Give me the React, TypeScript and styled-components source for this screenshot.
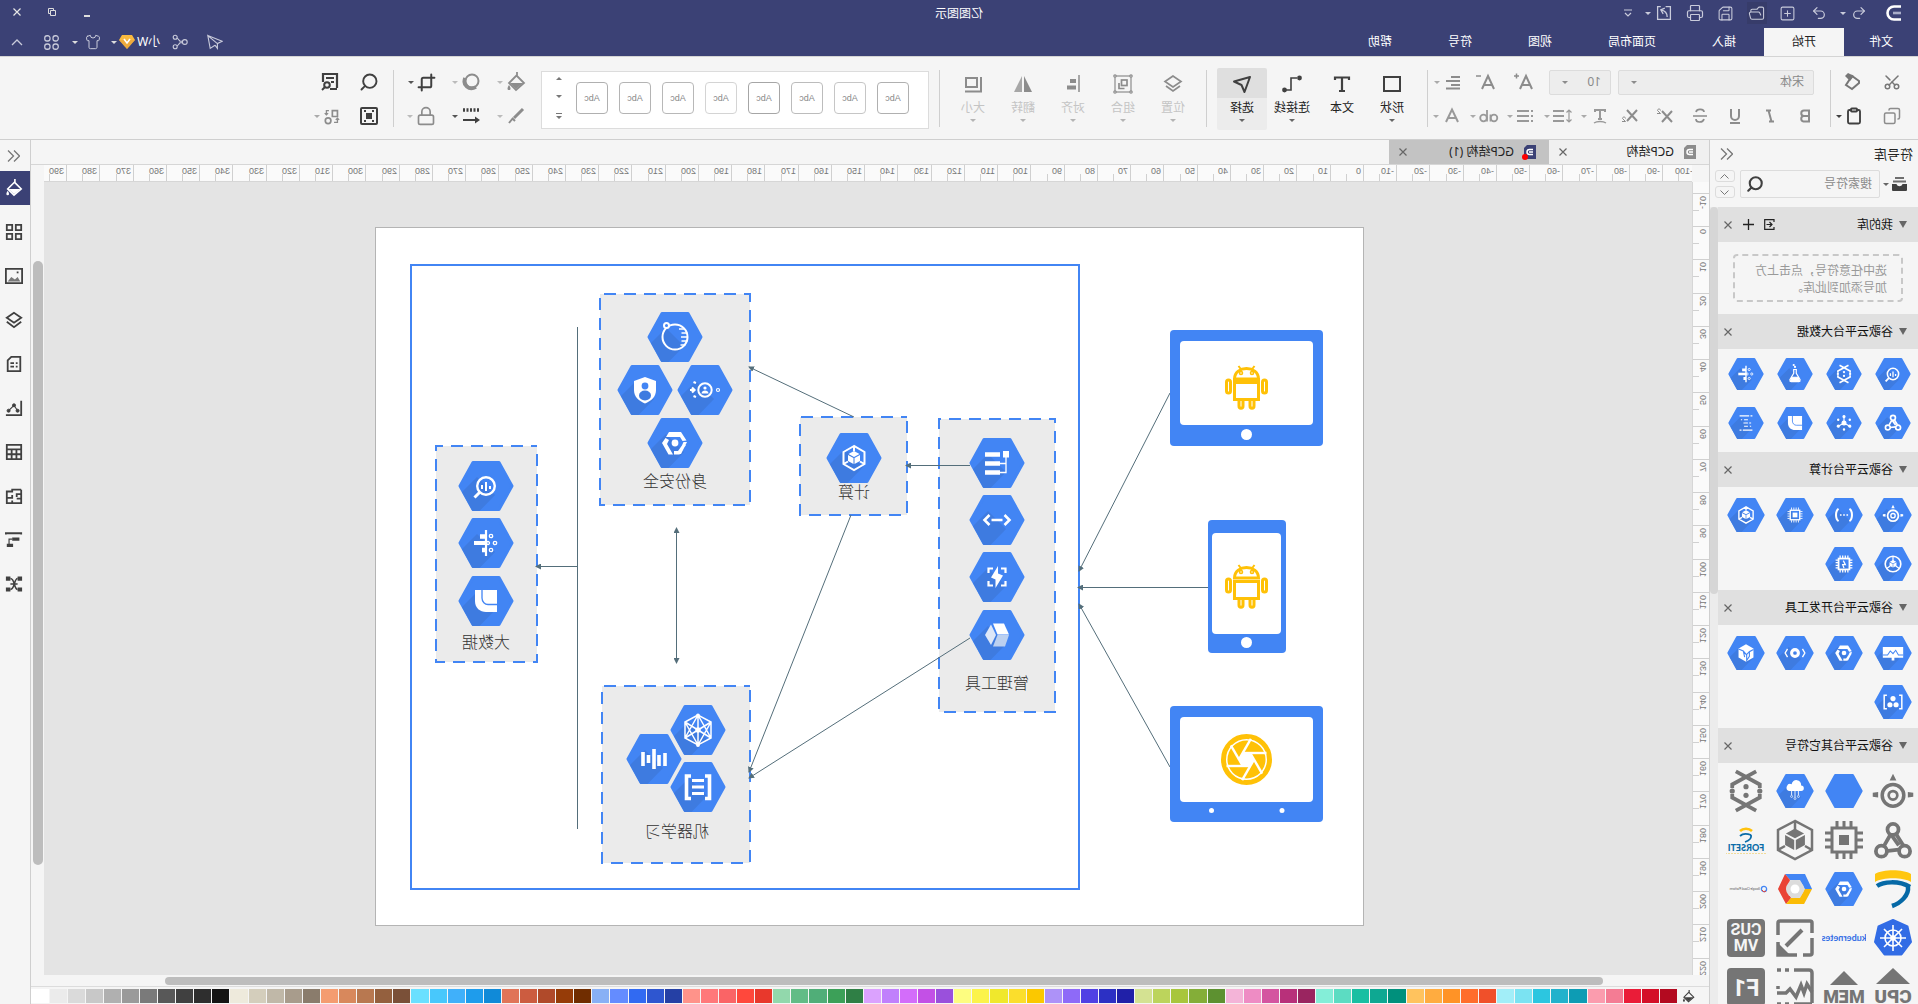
import React from "react";
import styled, { createGlobalStyle } from "styled-components";
import {
  Clipboard, Copy, Crop, FolderOpen, Lock, Printer,
  Redo2, Save, Scissors, Search, Shirt, SquarePlus, Undo2,
} from "lucide-react";

const INK = "#404040";
const DIM = "#8c8c8c";
const NAVY = "#3b4175";
const BLUE = "#4285f4";
const GREY = "#757575";
const LINE = "#546e7a";
const AMBER = "#ffc107";

const Global = createGlobalStyle`
  * { box-sizing: border-box; }
  body { margin: 0; overflow: hidden; }
  button, input, select { font: inherit; color: inherit; }
  svg { display: block; flex: none; }
`;

const Mirror = styled.div`
  display: flex;
  flex-direction: column;
  height: 100vh;
  transform: scaleX(-1);
  background: #f5f5f5;
  color: #222;
  font-family: "Noto Sans", "Noto Sans CJK SC", sans-serif;
  font-size: 12px;
  line-height: 16px;
`;

const Bare = styled.button<{ $w?: number }>`
  display: flex;
  align-items: center;
  justify-content: center;
  flex: none;
  width: ${(p) => (p.$w ? p.$w + "px" : "auto")};
  padding: 0;
  border: 0;
  background: none;
`;

const Caret = styled.i<{ $c?: string; $up?: boolean }>`
  flex: none;
  width: 0;
  height: 0;
  border: 3px solid transparent;
  border-top: ${(p) => (p.$up ? 0 : `3px solid ${p.$c || DIM}`)};
  border-bottom: ${(p) => (p.$up ? `3px solid ${p.$c || DIM}` : 0)};
`;

/* ---------- title bar ---------- */

const Header = styled.header`
  background: ${NAVY};
  color: #fff;
  border-bottom: 1px solid #d4d4d4;
`;
const TitleRow = styled.div`
  display: grid;
  grid-template-columns: 1fr auto 1fr;
  align-items: center;
  height: 28px;
`;
const Quick = styled.div`
  display: flex;
  align-items: center;
  gap: 11px;
  padding: 0 0 2px 16px;
  color: #c9cbdb;
`;
const QuickButton = styled(Bare)<{ $lit?: boolean }>`
  min-width: 20px;
  height: 22px;
  background: ${(p) => (p.$lit ? "#373c6a" : "none")};
`;
const QuickSplit = styled(Bare)`
  justify-content: space-between;
  width: 29px;
  padding: 0 0 0 2px;
`;
const LogoGap = styled.div`
  margin-right: 6px;
`;
const WindowButtons = styled.div`
  display: flex;
  justify-content: flex-end;
  padding-bottom: 4px;
`;
const TabRow = styled.div`
  display: flex;
  justify-content: space-between;
  height: 28px;
`;
const Tabs = styled.nav`
  display: flex;
`;
const Tab = styled.button<{ $on?: boolean; $first?: boolean }>`
  border: 0;
  padding: ${(p) => (p.$first ? "0 25px" : "0 28px")};
  background: ${(p) => (p.$on ? "#f5f5f5" : "none")};
  color: ${(p) => (p.$on ? "#222" : "#fff")};
`;
const Tools = styled.div`
  display: flex;
  align-items: center;
  gap: 10px;
  color: #c9cbdb;
`;
const Account = styled(Bare)`
  gap: 2px;
  color: #fff;
`;
const Spread = styled.div`
  display: flex;
  align-items: center;
  gap: 19px;
  margin-right: 2px;
`;
const ShirtButton = styled(Bare)`
  gap: 7px;
  margin-right: 3px;
`;

/* ---------- ribbon ---------- */

const Ribbon = styled.section`
  display: flex;
  flex: none;
  height: 83px;
  border-bottom: 1px solid #cfcfcf;
`;
const Rule = styled.div`
  flex: none;
  width: 1px;
  height: 57px;
  margin-top: 13px;
  background: #cfcfcf;
`;
const Rows = styled.div<{ $pad: string }>`
  display: flex;
  flex-direction: column;
  padding: ${(p) => p.$pad};
`;
const Row = styled.div<{ $pad?: number }>`
  display: flex;
  align-items: center;
  height: 34px;
  padding-left: ${(p) => p.$pad || 0}px;
`;
const SplitButton = styled.button<{ $w: number; $c?: string }>`
  display: flex;
  align-items: center;
  gap: 3px;
  flex: none;
  width: ${(p) => p.$w}px;
  padding: 0 0 0 3px;
  border: 0;
  background: none;
  color: ${(p) => p.$c || DIM};
`;
const Picker = styled.label<{ $w: number }>`
  display: flex;
  align-items: center;
  justify-content: space-between;
  width: ${(p) => p.$w}px;
  height: 25px;
  margin-right: 7px;
  padding: 0 12px 0 9px;
  border: 1px solid #dcdcdc;
  border-radius: 2px;
  background: #ededed;
  color: #8a8a8a;
`;
const Select = styled.select`
  flex: 1;
  min-width: 0;
  appearance: none;
  border: 0;
  background: none;
`;
const Big = styled.button<{ $on?: boolean; $dim?: boolean }>`
  display: flex;
  flex-direction: column;
  align-items: center;
  flex: none;
  width: 50px;
  height: 62px;
  margin-top: 11px;
  padding: 0;
  border: 0;
  border-radius: 2px;
  background: ${(p) => (p.$on ? "linear-gradient(#dfdfdf 30px, #ececec 30px)" : "none")};
  color: ${(p) => (p.$dim ? DIM : INK)};
`;
const BigIcon = styled.span`
  display: grid;
  place-items: center;
  height: 32px;
`;
const BigLabel = styled.span<{ $dim?: boolean }>`
  margin-bottom: 3px;
  color: ${(p) => (p.$dim ? "#c4c4c4" : "#222")};
`;
const BigSet = styled.div<{ $pad: number }>`
  display: flex;
  padding: 0 ${(p) => p.$pad}px;
`;
const Gallery = styled.div`
  display: flex;
  flex: none;
  align-items: center;
  gap: 11px;
  width: 388px;
  height: 58px;
  margin: 14px 8px 0 10px;
  padding: 0 0 4px 19px;
  border: 1px solid #dcdcdc;
  background: #fff;
`;
const Swash = styled.button<{ $b: string }>`
  width: 32px;
  height: 32px;
  padding: 0;
  border: 1px solid ${(p) => p.$b};
  border-radius: 4px;
  background: #fff;
  color: #888;
  font-family: "Liberation Sans", sans-serif;
  font-size: 9px;
`;
const Scroller = styled.div`
  display: flex;
  flex-direction: column;
  justify-content: space-between;
  height: 42px;
  margin-left: 3px;
`;

/* ---------- body ---------- */

const Body = styled.main`
  display: flex;
  flex: 1;
  min-height: 0;
`;
const Library = styled.aside`
  display: flex;
  flex-direction: column;
  flex: none;
  width: 209px;
  border-right: 1px solid #cfcfcf;
`;
const LibraryHead = styled.div`
  display: flex;
  justify-content: space-between;
  align-items: center;
  height: 27px;
  padding: 0 10px 0 5px;
  font-size: 13px;
`;
const SearchRow = styled.div`
  display: flex;
  align-items: center;
  gap: 3px;
  height: 40px;
  padding: 0 5px 6px 11px;
`;
const SearchBox = styled.label`
  display: flex;
  align-items: center;
  flex: 1;
  min-width: 0;
  height: 28px;
  margin-right: 2px;
  padding: 0 5px 0 7px;
  border: 1px solid #dcdcdc;
  border-radius: 2px;
  color: ${INK};
`;
const SearchInput = styled.input`
  flex: 1;
  min-width: 0;
  padding: 0;
  border: 0;
  background: none;
  &::placeholder { color: #8a8a8a; }
`;
const Steps = styled.div`
  display: flex;
  flex-direction: column;
  gap: 4px;
`;
const Step = styled.button`
  display: grid;
  place-items: center;
  width: 20px;
  height: 12px;
  padding: 0;
  border: 1px solid #dcdcdc;
  border-radius: 3px;
  background: none;
`;
const Scroll = styled.div`
  display: flex;
  flex: 1;
  min-height: 0;
`;
const Sections = styled.div`
  flex: 1;
  overflow: hidden;
`;
const Track = styled.div`
  display: grid;
  grid-template-rows: 387fr 410fr;
  width: 8px;
  background: #ececec;
`;
const Thumb = styled.div<{ $c?: string }>`
  border-radius: 5px;
  background: ${(p) => p.$c || "#bdbdbd"};
`;
const SectionHead = styled.div`
  display: flex;
  align-items: center;
  height: 35px;
  padding: 0 0 0 11px;
  background: #e0e0e0;
  color: #111;
`;
const SectionTitle = styled.h3`
  flex: 1;
  margin: 0 0 0 6px;
  font-size: 12px;
  font-weight: 400;
`;
const Triangle = styled.i`
  border: 4px solid transparent;
  border-top: 7px solid #666;
  border-bottom: 0;
`;
const Hint = styled.p`
  margin: 12px 15px;
  height: 48px;
  padding: 6px 14px;
  border: 2px dashed #c8c8c8;
  border-radius: 4px;
  color: #999;
  line-height: 17px;
`;
const Cells = styled.div<{ $pad: string }>`
  display: grid;
  grid-template-columns: repeat(4, 49px);
  grid-auto-rows: 49px;
  padding: ${(p) => p.$pad};
`;
const Cell = styled.button`
  display: grid;
  place-items: center;
  padding: 0;
  border: 0;
  background: none;
`;

const Center = styled.section`
  display: flex;
  flex-direction: column;
  flex: 1;
  min-width: 0;
`;
const DocTabs = styled.div`
  display: flex;
  flex: none;
  height: 25px;
  border-bottom: 1px solid #d6d6d6;
`;
const DocTab = styled.div<{ $on?: boolean }>`
  display: flex;
  align-items: center;
  gap: 10px;
  width: 160px;
  padding: 0 10px 0 13px;
  background: ${(p) => (p.$on ? "#c3c3c3" : "#f0f0f0")};
`;
const DocName = styled.span`
  flex: 1;
  white-space: nowrap;
`;
const DocIcon = styled.span`
  position: relative;
`;
const Dot = styled.i`
  position: absolute;
  right: -2px;
  bottom: -1px;
  width: 6px;
  height: 6px;
  border-radius: 3px;
  background: #f00;
`;
const Work = styled.div`
  display: grid;
  grid-template-columns: 17px 1fr 13px;
  grid-template-rows: 17px 1fr 12px;
  flex: 1;
  min-height: 0;
`;
const RulerX = styled.div`
  display: grid;
  grid-template-columns: repeat(13, 33px 33px 33px 34px);
  overflow: hidden;
  border-bottom: 1px solid #d6d6d6;
  background: #fafafa;
`;
const MarkX = styled.span`
  padding-left: 2px;
  border-left: 1px solid #d0d0d0;
  background: linear-gradient(#d0d0d0, #d0d0d0) 16px 100% / 1px 7px no-repeat;
  color: #777;
  font: 9px/12px "Liberation Sans", sans-serif;
`;
const ShiftX = styled.div`
  min-width: 0;
  overflow: hidden;
  & > div { margin-left: -4px; height: 100%; }
`;
const RulerY = styled.div`
  overflow: hidden;
  min-height: 0;
  border-right: 1px solid #d6d6d6;
  background: #fafafa;
`;
const MarksY = styled.div`
  display: grid;
  grid-template-rows: repeat(8, 33px 33px 33px 34px);
  margin-top: -22px;
`;
const MarkY = styled.span`
  padding-top: 2px;
  border-top: 1px solid #d0d0d0;
  background: linear-gradient(#d0d0d0, #d0d0d0) 100% 16px / 6px 1px no-repeat;
  color: #777;
  font: 9px/12px "Liberation Sans", sans-serif;
`;
const Turned = styled.span`
  display: inline-block;
  writing-mode: vertical-rl;
  transform: rotate(180deg);
  vertical-align: top;
`;
const Canvas = styled.div`
  overflow: hidden;
  min-width: 0;
  min-height: 0;
  padding: 45px 0 0 328px;
  background: #e4e4e4;
`;
const Paper = styled.div`
  width: 989px;
  border: 1px solid #b4b4b4;
  background: #fff;
`;
const SideTrack = styled.div`
  display: grid;
  grid-row: 1 / 3;
  grid-column: 3;
  grid-template-rows: 96fr 604fr 110fr;
  padding: 0 2px 0 1px;
`;
const BottomTrack = styled.div`
  display: grid;
  grid-row: 3;
  grid-column: 1 / 4;
  grid-template-columns: 106fr 1438fr 134fr;
  padding: 2px 0 1px;
  border-bottom: 1px solid #dcdcdc;
`;
const SideThumb = styled(Thumb)`
  grid-row: 2;
`;
const BottomThumb = styled(Thumb)`
  grid-column: 2;
`;
const Palette = styled.div`
  display: flex;
  flex: none;
  gap: 1px;
  height: 17px;
  padding: 2px 0 1px 9px;
  overflow: hidden;
`;
const Swatch = styled.button<{ $c: string }>`
  flex: 1;
  min-width: 0;
  padding: 0;
  border: 0;
  background: ${(p) => p.$c};
`;

const Dock = styled.aside`
  display: flex;
  flex-direction: column;
  flex: none;
  width: 31px;
  border-left: 1px solid #cfcfcf;
`;
const DockTop = styled(Bare)`
  height: 31px;
  padding-left: 3px;
`;
const DockButton = styled.button<{ $on?: boolean }>`
  display: flex;
  align-items: center;
  justify-content: center;
  height: 34px;
  margin-bottom: 10px;
  padding: 0 0 0 2px;
  border: 0;
  background: ${(p) => (p.$on ? NAVY : "none")};
  color: ${(p) => (p.$on ? "#fff" : INK)};
`;

/* ---------- small drawings ---------- */

type Kids = { children: React.ReactNode };
const Ico = ({ s = 20, w = 2, children }: Kids & { s?: number; w?: number }) => (
  <svg width={s} height={s} viewBox="0 0 20 20" fill="none" stroke="currentColor" strokeWidth={w} aria-hidden>
    {children}
  </svg>
);
const Cross = ({ c = "#666", s = 8 }) => (
  <svg width={s} height={s} viewBox="0 0 8 8" stroke={c} strokeWidth="1.2"><path d="M.5.5l7 7M7.5.5l-7 7" /></svg>
);
const Chevrons = () => (
  <svg width="13" height="12" viewBox="0 0 13 12" fill="none" stroke="#777" strokeWidth="1.3">
    <path d="M6 .5L.5 6 6 11.500M12 .5L6.500 6 12 11.500" />
  </svg>
);
const Doc = ({ c }: { c: string }) => (
  <svg width="12" height="14" viewBox="0 0 12 14">
    <path d="M0 0h9l3 3v11H0z" fill={c} />
    <path d="M3 4.500h3.500a2.500 2.500 0 0 1 0 5H3M3 7h4" fill="none" stroke="#fff" strokeWidth="1.500" />
  </svg>
);
const Bucket = () => (
  <>
    <path d="M9 3l8 8-7 7-8-7 7-7M9 4V0" strokeWidth="1.800" />
    <path d="M3 11h13l-6 6z" fill="currentColor" stroke="none" />
    <path d="M17 13c2 3 2 5 0 5s-2-2 0-5" fill="currentColor" stroke="none" />
  </>
);

/* ---------- cloud symbols ---------- */

const W = "#fff";
const cube = (c: string) => (
  <g fill={c}>
    <path d="M0-7l5.500 3L0-1-5.500-4z" />
    <path d="M-6-3l5.500 3v6L-6 3zM6-3L.5 0v6L6 3z" />
  </g>
);
const chipLegs = "M-6-9v-4M-2-9v-4M2-9v-4M6-9v-4M-6 9v4M-2 9v4M2 9v4M6 9v4M-9-6h-4M-9-2h-4M-9 2h-4M-9 6h-4M9-6h4M9-2h4M9 2h4M9 6h4";
const helix = (c: string) => (
  <g stroke={c} strokeWidth="2.600" fill="none">
    <path d="M-7-13.500L9.500-4.500v2.500M7-13.500L-9.500-4.500v2.500M-7 13.500L9.500 4.500v-2.500M7 13.500L-9.500 4.500v-2.500" />
    <g fill={c} stroke="none"><circle cx="-9.500" r="1.800" /><circle cx="9.500" r="1.800" /><circle r="1.800" cy="-3" /><circle r="1.800" cy="3" /></g>
  </g>
);
const nodes3 = (c: string) => (
  <g stroke={c} strokeWidth="2.600" fill="none">
    <circle cy="-8" r="3.800" /><circle cx="-8" cy="7" r="3.800" /><circle cx="8" cy="7" r="3.800" />
    <path d="M-2-5l-5 8M-4 6L5 7M2-4l4 7M-4 3L1-4" />
  </g>
);
const engine = (c: string) => (
  <g stroke={c} fill="none" strokeWidth="2.600">
    <circle r="8" cy="1" /><circle r="3.200" cy="1" strokeWidth="2" />
    <path d="M0-15l2.500 5h-5zM-15 1l0-2 4-.5v4l-4-.5zM15 1l0-2-4-.5v4l4-.5z" fill={c} stroke="none" />
  </g>
);
const ring = (c: string) => (
  <g fill={c}>
    <path d="M-6-11H6l3 5H-1l-4 0-2.500 4-4-.5z" />
    <path d="M-12-1l3.500 0L-3 11h-3zM-8 1l5 7 4 0 0 3.500h-5.500L-11 2z" />
    <path d="M9.500-5L13 0 6.500 11.500H2L8 1 6-3z" />
    <circle r="3.400" />
  </g>
);
const cubeHex = (c: string) => (
  <g>
    <path d="M0-12L10.500-6v12L0 12-10.500 6V-6zM0-12v5M-10.500 6L-6 3.500M10.500 6L6 3.500" fill="none" stroke={c} strokeWidth="2" />
    {cube(c)}
  </g>
);

const glyphs: Record<string, React.ReactNode> = {
  query: (
    <g stroke={W} fill="none" strokeWidth="2.400">
      <circle r="8.800" /><path d="M6.500 6.500l5 5" strokeWidth="3" />
      <path d="M-4 0v3M0-4v9M4-1v4" strokeWidth="2" />
    </g>
  ),
  flow: (
    <g stroke={W} fill="none">
      <path d="M0-13v26" strokeWidth="2.200" />
      <path d="M0-6.500h6M0 7h4" strokeWidth="4.500" /><path d="M0 0h12" strokeWidth="4" />
      <g strokeWidth="1.300"><circle cx="-5" cy="-7" r="1.700" /><circle cx="-9" r="1.700" /><circle cx="-5" cy="7" r="1.700" /><circle cx="-2" r="1.500" /></g>
    </g>
  ),
  quarter: (
    <g>
      <path d="M-11-11h22V0c0 7-5 11-11 11h-11z" fill={W} />
      <path d="M4-11v8c0 4-3 6.500-6 6.500h-9" fill="none" stroke={BLUE} strokeWidth="1.300" />
    </g>
  ),
  helix: helix(W),
  flask: (
    <g fill="none" stroke={W} strokeWidth="1.800">
      <path d="M-3-7h6M-2-7v6L-8 9c0 2 1 3 2 3H6c1 0 2-1 2-3L2-1v-6" />
      <path d="M-5 5h10l2 6H-7z" fill={W} /><circle cy="-11" r=".8" /><circle cx="2" cy="-14" r=".8" />
    </g>
  ),
  nodes: nodes3(W),
  star: (
    <g stroke={W} strokeWidth="1.800" fill={W}>
      <path d="M0 0v-10M0 0l-9 5M0 0l9 5" /><circle r="3" />
      <circle cy="-10" r="1.600" /><circle cx="-9" cy="5" r="1.600" /><circle cx="9" cy="5" r="1.600" />
      <circle cx="-9" cy="-5" r="1" /><circle cx="9" cy="-5" r="1" /><circle cy="10" r="1" />
    </g>
  ),
  prep: (
    <g stroke={W} strokeWidth="1.800" fill="none">
      <path d="M-10-11h3M-5-11h15M-3-5h6M-8 0h3M-3 0h7M-3 5h6M-10 11h15M7 11h3M6-5h2M-8 5h2" />
    </g>
  ),
  cubeHex: cubeHex(W),
  chip: (
    <g stroke={W} fill="none" strokeWidth="2"><rect x="-7" y="-7" width="14" height="14" /><rect x="-2.500" y="-2.500" width="5" height="5" fill={W} /><path d={chipLegs} transform="scale(.85)" strokeWidth="1.500" /></g>
  ),
  gpu: (
    <g stroke={W} fill="none" strokeWidth="2.600"><rect x="-8" y="-8" width="16" height="16" /><path d="M1-5l-3 6h4l-2 5" strokeWidth="1.800" /><path d={chipLegs} transform="scale(.95)" strokeWidth="2" /></g>
  ),
  func: (
    <g stroke={W} fill="none" strokeWidth="3">
      <path d="M-8-9c-5 3-5 15 0 18M8-9c5 3 5 15 0 18" /><path d="M-6 0h2.400M-1.200 0h2.400M3.600 0h2.400" strokeWidth="2.400" />
    </g>
  ),
  engine: engine(W),
  round: (
    <g><circle r="11.500" fill="none" stroke={W} strokeWidth="2.400" /><path d="M0-4V-11M-4 3l-6 4M4 3l6 4" stroke={W} strokeWidth="1.800" /><g transform="scale(.85)">{cube(W)}</g></g>
  ),
  monitor: (
    <g><path d="M-15-9h30V7H2v4h-4V7h-13z" fill={W} /><path d="M-15 3h7l4-7 4 5 4-4 4 6h7" fill="none" stroke={BLUE} strokeWidth="1.500" /></g>
  ),
  ring: ring(W),
  eye: (
    <g stroke={W} fill="none"><circle r="5" strokeWidth="4.500" /><path d="M-11-6l-3.500 6 3.500 6M11-6l3.500 6L11 6" strokeWidth="2" /></g>
  ),
  repo: (
    <g><path d="M0-13L11-6.500v13L0 13-11 6.500v-13z" fill={W} /><path d="M-11-5l6 3v7l4 6V3l5-6 7-3M-5-2l5 5M4-3L2 6" fill="none" stroke={BLUE} strokeWidth="1.600" /></g>
  ),
  registry: (
    <g fill={W}><path d="M-9-10h-4v20h4M9-10h4v20H9" fill="none" stroke={W} strokeWidth="2.200" /><circle cy="-5" r="3.800" /><circle cx="-4.500" cy="4" r="3.800" /><circle cx="4.500" cy="4" r="3.800" /></g>
  ),
  rain: (
    <g fill={W} stroke={W}><path d="M-9 0a4 4 0 0 1 0-8 7 7 0 0 1 14-2 5 5 0 0 1 4 10z" stroke="none" /><path d="M-5 0v6M0 0v9M5 0v6" strokeWidth="1.300" /><g fill="none"><circle cx="-5" cy="8" r="1.500" /><circle cy="11" r="1.500" /><circle cx="5" cy="8" r="1.500" /></g></g>
  ),
  deploy: (
    <g stroke={W} fill="none"><path d="M-3-8.500h15M-3 .5h15M-3 9.500h15" strokeWidth="4.600" /><path d="M-9-6V9.500h6M-9 .5h6" strokeWidth="1.300" /><rect x="-12" y="-12" width="6" height="6.500" fill={W} stroke="none" /></g>
  ),
  arrows: (
    <g stroke={W} fill="none" strokeWidth="2.600"><path d="M-7.500-5L-12.500 0l5 5M7.500-5L12.500 0l-5 5M-5.500 0H5.500" /></g>
  ),
  bolt: (
    <g><path d="M-8.500-4v-4.500H-4M8.500-4v-4.500H4M-8.500 4v4.500H-4M8.500 4v4.500H4" fill="none" stroke={W} strokeWidth="2.200" /><path d="M1-11V-3.500L6-1.500-1.500 11V2.500L-6 .5z" fill={W} transform="scale(-1 1)" /></g>
  ),
  box: (
    <g><path d="M-7-11.500H4l-4.500 11H-12z" fill={W} /><path d="M-12 0H-.5L4 11.500H-8z" fill="#bbd0f0" /><path d="M6-10.500L12 0 6 10 1 0z" fill="#dde7f8" /></g>
  ),
  orbit: (
    <g stroke={W} fill="none" strokeWidth="2"><circle r="12.500" /><circle cx="8.500" cy="-11.500" r="2.500" fill={BLUE} /><path d="M-12.500-4h6M-13 0h7M-12.500 4h6M-10.500 8h5M-9-8h5" strokeWidth="1.600" /></g>
  ),
  identity: (
    <g stroke={W} fill="none"><circle r="6.700" strokeWidth="2" /><circle cy="-2" r="1.600" fill={W} stroke="none" /><path d="M-3.500 3.500c0-4 7-4 7 0z" fill={W} stroke="none" /><circle cx="-13" r="1.500" strokeWidth="1.200" /><path d="M10 0h5M13-2.500L10.500 0 13 2.500M9-7l2.500-1M9 7l2.500-1" strokeWidth="2.200" /></g>
  ),
  shield: (
    <g><path d="M0-13l11 4v9c0 7-5 11-11 13.500C-6 11-11 7-11 0v-9z" fill={W} /><circle cy="-4" r="3.400" fill={BLUE} /><ellipse cy="5.500" rx="6" ry="5" fill="#3e7be0" /></g>
  ),
  mesh: (
    <g stroke={W} fill="none" strokeWidth="1.500"><path d="M0-15L13-8V8L0 15-13 8V-8zM0-15v30M-13-8L13 8M13-8L-13 8M0-15L-13 8M0-15L13 8M0 15L-13-8M0 15L13-8" /><g fill={W}><circle r="2" /><circle cy="-14.500" r="1.200" /><circle cy="15" r="1.200" /></g></g>
  ),
  wave: <path d="M-11-6v13M-5-4v11M0-10v20M5.500-4v8M11-7v14" fill="none" stroke={W} strokeWidth="3.600" />,
  bracket: (
    <g stroke={W} fill="none"><path d="M-7-11h-4.500v22.500H-7M7-11h4.500v22.500H7" strokeWidth="3.600" /><path d="M-6-6.500H6M-6 0H6M-6 6.500H6" strokeWidth="2.800" /></g>
  ),
};

const HexShape = ({ name }: { name?: string }) => (
  <>
    <path d="M-26 0L-13-23.500H13L26 0 13 23.500H-13z" fill={BLUE} stroke={BLUE} strokeWidth="3" strokeLinejoin="round" />
    {name && <path d="M9-9L24 6 13.500 25H6.500L-9 9z" fill="#3e7be0" />}
    {name && glyphs[name]}
  </>
);
const Hex = ({ name, w = 38 }: { name?: string; w?: number }) => (
  <svg width={w} height={w - 2} viewBox="-28 -26.500 56 53"><HexShape name={name} /></svg>
);
const Plain = ({ children }: Kids) => (
  <svg width="44" height="44" viewBox="-22 -22 44 44">{children}</svg>
);

const misc: React.ReactNode[] = [
  <Plain><g transform="translate(0 3) scale(1.350)">{engine(GREY)}</g></Plain>,
  <Hex />,
  <Hex name="rain" />,
  <Plain><g transform="scale(1.450)">{helix(GREY)}</g></Plain>,
  <Plain><g transform="translate(0 1) scale(1.450)">{nodes3(GREY)}</g></Plain>,
  <Plain>
    <rect x="-12" y="-12" width="24" height="24" fill="none" stroke={GREY} strokeWidth="3" />
    <rect x="-5" y="-5" width="10" height="10" fill={GREY} />
    <path d="M-7-13v-6M0-13v-6M7-13v-6M-7 13v6M0 13v6M7 13v6M-13-7h-6M-13 0h-6M-13 7h-6M13-7h6M13 0h6M13 7h6" stroke={GREY} strokeWidth="3" />
  </Plain>,
  <Plain>
    <path d="M0-19L17-10v20L0 19-17 10v-20zM0-19v9M-17 10l7-4M17 10l-7-4" fill="none" stroke={GREY} strokeWidth="2.500" />
    <g transform="scale(1.650)">{cube(GREY)}</g>
  </Plain>,
  <Plain>
    <path d="M-6-9C-3-12 3-12 6-9" fill="none" stroke="#ffc20e" strokeWidth="2.600" />
    <path d="M-5-5C-6-1-2 1 1 2M-5-5C0-7 4-6 6-4" fill="none" stroke="#0a6ca8" strokeWidth="1.800" />
    <text x="0" y="11" fontSize="9" fontWeight="900" textAnchor="middle" fill="#0a6ca8" fontFamily="Lato">FORSETI</text>
    <path d="M-20 13.500h40" stroke="#f1dc9a" strokeDasharray="2 1" />
  </Plain>,
  <Plain>
    <path d="M-18-15C-10-20 10-20 18-15v8C10-12-10-12-18-7z" fill="#ffc610" />
    <path d="M-17-2C-5-9 10-7 16-3M-15-2C-16 6-8 14 1 17" fill="none" stroke="#0669a6" strokeWidth="4.500" />
  </Plain>,
  <Hex name="ring" />,
  <Plain>
    <path d="M-9-15H9L17 0 9 15H-9L-17 0z" fill="#e0e0e0" />
    <path d="M-10-15H10l-5 6H-5l-5 9-7 0z" fill={BLUE} />
    <path d="M10-15L17 0 9 15l-5-6 5-9-4-9z" fill="#ea4335" />
    <path d="M9 15H-9L-17 0h7l5 9h9z" fill="#fbbc05" />
    <circle r="9" fill="#dcdcdc" /><circle r="4.500" fill="#fff" />
  </Plain>,
  <Plain>
    <circle cx="-18" r="2.600" fill="none" stroke={BLUE} strokeWidth="1.300" /><path d="M-20 2l2 1 2-2" fill="none" stroke="#ea4335" />
    <text x="-14" y="1" fontSize="3" fill="#555" fontFamily="Roboto">Google Cloud Platform</text>
  </Plain>,
  <Plain>
    <path d="M0-18L14.500-11.500 18 4 8.500 16.500h-17L-18 4-14.500-11.500z" fill="#326ce5" stroke="#326ce5" strokeWidth="2" strokeLinejoin="round" />
    <g stroke="#fff" fill="none" strokeWidth="1.600"><circle r="8" /><circle r="2" /><path d="M0-13v26M-13 0h26M-9-9L9 9M9-9L-9 9" /></g>
  </Plain>,
  <Plain><text y="3" fontSize="9" fontWeight="700" textAnchor="middle" fill="#326ce5" fontFamily="Lato">kubernetes</text></Plain>,
  <Plain>
    <path d="M-17-5v-10q0-2 2-2H15q2 0 2 2V-3M17 4v11M11 17H-2M-8 17h-7q-2 0-2-2V0M17 6v11H6" fill="none" stroke={GREY} strokeWidth="3.500" />
    <path d="M-7-8L9 8" stroke={GREY} strokeWidth="4" /><path d="M17 17V5L5 17z" fill={GREY} />
  </Plain>,
  <Plain>
    <rect x="-19" y="-19" width="38" height="38" rx="4" fill={GREY} />
    <text y="-3" fontSize="16" fontWeight="700" textAnchor="middle" fill="#f5f5f5" fontFamily="Roboto">CUS</text>
    <text y="13" fontSize="16" fontWeight="700" textAnchor="middle" fill="#f5f5f5" fontFamily="Roboto">VM</text>
  </Plain>,
  <Plain>
    <path d="M0-19L17-3h-34z" fill={GREY} />
    <text y="16" fontSize="19" fontWeight="900" textAnchor="middle" fill={GREY} fontFamily="Roboto">CPU</text>
  </Plain>,
  <Plain>
    <path d="M0-16L14-2h-28z" fill={GREY} />
    <text y="16" fontSize="18" fontWeight="900" textAnchor="middle" fill={GREY} fontFamily="Roboto">MEM</text>
  </Plain>,
  <Plain>
    <path d="M-17 16v-30q0-3 3-3h15" fill="none" stroke={GREY} strokeWidth="3.500" />
    <path d="M6-17h4M14-17h4M17-1v3M14 17h4M6 17h4M-17 17H1M18 6H9L5 2-1 10-6-2-9 6l-3-9-5 8" fill="none" stroke={GREY} strokeWidth="3.500" />
  </Plain>,
  <Plain>
    <rect x="-19" y="-19" width="38" height="38" rx="4" fill={GREY} />
    <text y="9" fontSize="24" fontWeight="700" textAnchor="middle" fill="#f5f5f5" fontFamily="Roboto">F1</text>
  </Plain>,
];

const libraries = [
  { title: "谷歌云平台大数据", dense: true, items: ["query", "helix", "flask", "flow", "nodes", "star", "quarter", "prep"] },
  { title: "谷歌云平台计算", items: ["engine", "func", "chip", "cubeHex", "round", "gpu"] },
  { title: "谷歌云平台开发工具", items: ["monitor", "ring", "eye", "repo", "registry"] },
];

/* ---------- diagram ---------- */

const Label = styled.text`
  fill: #333;
  font: 300 16px "Noto Sans CJK SC", sans-serif;
  text-anchor: middle;
`;

const groups = [
  { x: 863, y: 419, w: 116, h: 293, label: "管理工具", lx: 921, ly: 689, hexes: [["deploy", 921, 463], ["arrows", 921, 520], ["bolt", 921, 577], ["box", 921, 635]] },
  { x: 1011, y: 417, w: 107, h: 98, label: "计算", lx: 1064, ly: 498, hexes: [["cubeHex", 1064, 458]] },
  { x: 1168, y: 294, w: 150, h: 211, label: "身份安全", lx: 1243, ly: 487, hexes: [["orbit", 1243, 337], ["identity", 1213, 390], ["shield", 1273, 390], ["ring", 1243, 443]] },
  { x: 1168, y: 686, w: 148, h: 177, label: "机器学习", lx: 1241, ly: 837, hexes: [["mesh", 1220, 730], ["wave", 1264, 759], ["bracket", 1220, 787]] },
  { x: 1381, y: 446, w: 101, h: 216, label: "大数据", lx: 1432, ly: 648, hexes: [["query", 1432, 486], ["flow", 1432, 543], ["quarter", 1432, 601]] },
] as { x: number; y: number; w: number; h: number; label: string; lx: number; ly: number; hexes: [string, number, number][] }[];

const Droid = ({ y, band = false }: { y: number; band?: boolean }) => (
  <g transform={`translate(671.500 ${y})`} fill="none" stroke={AMBER} strokeWidth="3">
    <path d="M-12 12C-12-2 12-2 12 12z" />
    {band && <path d="M-12 12.500h24v3h-24z" fill={AMBER} />}
    <path d="M-8-1l3 4M8-1L5 3" strokeWidth="2" />
    <path d="M-12 15.500h24v17h-24zM-7.500 33v6c0 3 4 3 4 0v-6M3.500 33v6c0 3 4 3 4 0v-6" />
    <rect x="-20" y="13" width="4" height="13" rx="2" /><rect x="16" y="13" width="4" height="13" rx="2" />
    <circle cx="-5.500" cy="6" r=".8" /><circle cx="5.500" cy="6" r=".8" />
  </g>
);

const links = [
  "M748 393L839 571",
  "M710 587.500H840",
  "M748 767L839 604",
  "M948 465.500h64",
  "M1064 417L1169 367",
  "M1067 515L1169 772",
  "M948 638L1169 778",
  "M1340 566.500h42",
];

const Diagram = () => (
  <svg width="987" height="697" viewBox="555 228 987 697">
    <defs>
      <marker id="tip" viewBox="0 0 6 6" refX="5" refY="3" markerWidth="6" markerHeight="6" markerUnits="userSpaceOnUse" orient="auto-start-reverse">
        <path d="M0 0l6 3-6 3z" fill={LINE} />
      </marker>
    </defs>
    <rect x="839" y="265" width="668" height="624" fill="none" stroke={BLUE} strokeWidth="2" />
    {groups.map((g) => (
      <rect key={g.label} x={g.x} y={g.y} width={g.w} height={g.h} fill="#ebebeb" stroke={BLUE} strokeWidth="2" strokeDasharray="12 8" strokeDashoffset="6" />
    ))}
    {groups.map((g) => (
      <g key={g.label}>
        {g.hexes.map(([n, x, y]) => (
          <g key={n} transform={`translate(${x} ${y})`}><HexShape name={n} /></g>
        ))}
        <Label x={g.lx} y={g.ly}>{g.label}</Label>
      </g>
    ))}
    <g fill="none" stroke={LINE}>
      {links.map((d) => <path key={d} d={d} markerEnd="url(#tip)" />)}
      <path d="M1241.500 528v135" markerStart="url(#tip)" markerEnd="url(#tip)" />
      <path d="M1340.500 327v502" />
    </g>
    <g fill={BLUE}>
      <rect x="595" y="330" width="153" height="116" rx="4" />
      <rect x="632" y="520" width="78" height="133" rx="4" />
      <rect x="595" y="706" width="153" height="116" rx="4" />
    </g>
    <g fill="#fff">
      <rect x="605" y="341" width="133" height="84" rx="4" />
      <rect x="637" y="533" width="69" height="101" rx="4" />
      <rect x="605" y="717" width="133" height="85" rx="4" />
      <circle cx="671.500" cy="434.500" r="5.500" /><circle cx="671.500" cy="642.500" r="5.500" />
      <circle cx="636" cy="810.500" r="2.500" /><circle cx="706.500" cy="810.500" r="2.500" />
    </g>
    <Droid y={367} band />
    <Droid y={566} />
    <g transform="translate(671.500 759.500) scale(-1 1)">
      <circle r="23" fill="none" stroke={AMBER} strokeWidth="5" />
      <circle r="19" fill={AMBER} />
      <path d="M-3.500-6.500H3.500L7.500 0 3.500 6.500H-3.500L-7.500 0z" fill="#fff" />
      <g stroke="#fff" strokeWidth="2.400">
        {[0, 60, 120, 180, 240, 300].map((a) => <path key={a} d="M-4-6.500H20" transform={`rotate(${a})`} />)}
      </g>
    </g>
  </svg>
);

/* ---------- data ---------- */

const palette = (
  "#b30a20 #d40f28 #ea1c38 #f47c94 #fb9cae #0d9cb4 #22b2cc #2cc6e0 #7be3f2 #a2eef8 " +
  "#f0502a #ff6d2c #ff9326 #ffac40 #ffc35e #00907c #0ea892 #18bfa2 #5cdcc2 #84eed8 " +
  "#9a2560 #b8307a #d455a0 #ee8cc4 #f4b4d8 #5d9130 #84ae38 #a8c63c #bcd45c #d4e292 " +
  "#2020a8 #2c30c4 #5040e4 #8e6af8 #ad92f8 #fbc800 #fbde2c #f0e82c #fbf34a #fdfd80 " +
  "#9a50dc #c350e6 #d36dfa #c080fc #dba2fe #2f7f45 #3ca058 #50ae78 #62bc86 #92d8ac " +
  "#e8382c #ff483c #fa6466 #ff787a #ff938a #2540a5 #2e56d0 #316af2 #648cff #88b0f5 " +
  "#702d00 #963c08 #b04a2a #cc5c40 #e07458 #108ad8 #1e9cec #40b0fa #48c8fc #6ae0ff " +
  "#7a5038 #94603e #b87850 #d8885c #f49c70 #8a7c6c #a89c8c #c0b8a8 #d4cebc #eeeadc " +
  "#141414 #2e2e2e #404040 #585858 #7a7a7a #9a9a9a #b0b0b0 #c8c8c8 #dadada #ebebeb #ffffff"
).split(" ");

const marks = (from: number, count: number) => Array.from({ length: count }, (_, i) => from + i * 10);

const formats: [string, React.ReactNode][] = [
  ["加粗", <path key="b" d="M6 4.500h5a2.700 2.700 0 0 1 0 5.500H6zM6 10h5.500a2.800 2.800 0 0 1 0 5.500H6z" />],
  ["斜体", <path key="i" d="M9 4.500h5M6 15.500h5M11.500 4.500l-3 11" />],
  ["下划线", <path key="u" d="M6 3v7a4 4 0 0 0 8 0V3M5 17h10" />],
  ["删除线", <path key="s" d="M14 6c-1-4-8-3-8 0M6 13c1 4 8 4 8 0M3 10h14" strokeWidth="1.700" />],
  ["上标", <g key="p"><path d="M3 5l10 11M13 5L3 16" /><path d="M14.500 4.500c0-2 3-2 3 0l-3 3h3.500" strokeWidth="1" /></g>],
  ["下标", <g key="q"><path d="M3 4l10 11M13 4L3 15" /><path d="M14.500 12.500c0-2 3-2 3 0l-3 3h3.500" strokeWidth="1" /></g>],
];

const splits: [string, React.ReactNode][] = [
  ["文字方向", <g key="t"><path d="M5 6V4h10v2M10 4v9M8 13h4" /><path d="M4 17c3-2 9-2 12 0" strokeWidth="1.500" /></g>],
  ["行距", <g key="l"><path d="M9 5h11M9 10h11M9 15h11" /><path d="M4 4v12M1.500 6.500L4 4l2.500 2.500M1.500 13.500L4 16l2.500-2.500" strokeWidth="1.200" /></g>],
  ["列表", <path key="u" d="M7 5h12M7 10h12M7 15h12M3 5h2M3 10h2M3 15h2" />],
  ["突出显示", <g key="h" strokeWidth="1.800"><circle cx="5" cy="12" r="3.300" /><path d="M8.500 8.500v7M12 4v11.500" /><circle cx="15.500" cy="12" r="3.300" /></g>],
  ["字体颜色", <path key="c" d="M4 16L10 3.500 16 16M6.500 12h7" />],
];

const bigOne: [string, React.ReactNode, boolean][] = [
  ["形状", <rect key="r" x="2" y="3" width="16" height="14" />, true],
  ["文本", <path key="t" d="M3 6V3.500h14V6M10 3.500v13.500M7 17h6" strokeWidth="2.200" />, false],
  ["连接线", <g key="c"><path d="M5 4h6v12h5" strokeWidth="1.600" /><circle cx="2.500" cy="4" r="1.400" fill="currentColor" /><circle cx="17.500" cy="16" r="1.400" fill="currentColor" /></g>, true],
  ["选择", <path key="s" d="M2 3l16 4.500-7.500 3.500L7.500 18z" strokeLinejoin="round" />, true],
];
const bigTwo: [string, React.ReactNode][] = [
  ["位置", <path key="p" d="M10 2l8 5.500-8 5.500-8-5.500zM3 12l7 5 7-5" strokeWidth="1.700" />],
  ["组合", <g key="g" strokeWidth="1.200"><rect x="2" y="2" width="16" height="16" /><rect x="6" y="6" width="5.500" height="5.500" strokeWidth="1.700" /><path d="M14 9v5.500H8.500" strokeWidth="1.700" /><g fill="#f5f5f5"><circle cx="2" cy="2" r="1.200" /><circle cx="18" cy="2" r="1.200" /><circle cx="2" cy="18" r="1.200" /><circle cx="18" cy="18" r="1.200" /></g></g>],
  ["对齐", <g key="a"><path d="M4 1v17" strokeWidth="1.500" /><path d="M7 7h6M7 13.500h9" strokeWidth="4" /></g>],
  ["翻转", <g key="f" stroke="none" fill="currentColor"><path d="M9 2v16H1z" /><path d="M11 2v16h8z" opacity=".75" /></g>],
  ["大小", <path key="s" d="M6 4h11v9H6zM2 3v14.500h16" />],
];

const dock: [string, React.ReactNode][] = [
  ["填充", <Ico key="1" s={18}><Bucket /></Ico>],
  ["符号", <Ico key="2" s={18}><path d="M2 2h6v6H2zM12 2h6v6h-6zM2 12h6v6H2zM12 12h6v6h-6z" /></Ico>],
  ["图片", <Ico key="3" s={18}><path d="M1 2h18v16H1z" /><path d="M3 16l3-5 3 3 4-3 4 5z" fill="#777" stroke="none" /><path d="M5 6h2" /></Ico>],
  ["图层", <Ico key="4" s={18}><path d="M10 2l8 5.500-8 5.500-8-5.500zM2 12l8 6 8-6" /></Ico>],
  ["备注", <Ico key="5" s={18}><path d="M3 2h10l4 4v12H3zM6 9h2M10 9h4M6 13h2M10 13h4" /></Ico>],
  ["图表", <Ico key="6" s={18}><path d="M2 2v16h17" /><path d="M6 13l4-6 6 6" strokeWidth="1.300" /><g fill="currentColor" strokeWidth="1"><circle cx="6" cy="13" r="1.700" /><circle cx="10" cy="7" r="1.700" /><circle cx="16" cy="13" r="1.700" /></g></Ico>],
  ["表格", <Ico key="7" s={18}><path d="M2 2h16v16H2zM2 7h16M2 12.500h16M7.300 7v11M12.600 7v11" /></Ico>],
  ["平面图", <Ico key="8" s={18}><path d="M2 3h10v-1M2 3v15h16V5h-6V2M2 8h5M7 11v-4M2 13h5M12 9v3h6M12 18v-3" /></Ico>],
  ["时间线", <Ico key="9" s={18}><path d="M2 4V2.500h17V4" /><path d="M4 9h8M11 16h7" strokeWidth="3.500" /><path d="M12 9h3.500v7" strokeWidth="1.300" /></Ico>],
  ["导图", <Ico key="10" s={18}><path d="M1 4h5M14 4h5M1 16h5M14 16h5" strokeWidth="4.500" /><path d="M6 4c4 0 3 12 8 12M6 16c4 0 3-12 8-12M6 10h8" strokeWidth="1.700" /></Ico>],
];

export default function App() {
  return (
    <>
      <Global />
      <Mirror>
        <Header>
          <TitleRow>
            <Quick>
              <LogoGap>
                <svg width="16" height="16" viewBox="0 0 16 16" fill="none" stroke="#fff" strokeWidth="2.600"><path d="M1 1.500h7a6.500 6.500 0 0 1 0 13H1" /><path d="M1 8h8" stroke="#a9adc9" /></svg>
              </LogoGap>
              <QuickSplit aria-label="撤销"><Undo2 size={16} strokeWidth={1.800} /><Caret $c="#c9cbdb" /></QuickSplit>
              <QuickButton aria-label="恢复"><Redo2 size={16} strokeWidth={1.800} /></QuickButton>
              <QuickButton aria-label="新建"><SquarePlus size={17} strokeWidth={1.500} /></QuickButton>
              <QuickButton aria-label="打开" $lit><FolderOpen size={17} strokeWidth={1.500} /></QuickButton>
              <QuickButton aria-label="保存"><Save size={17} strokeWidth={1.500} /></QuickButton>
              <QuickButton aria-label="打印"><Printer size={18} strokeWidth={1.600} /></QuickButton>
              <QuickSplit aria-label="导出"><Ico s={16} w={1.600}><path d="M8 2H2v16h16V2h-4M6 15c0-5 2-8 8-9M9 4l5 2-3 5" /></Ico><Caret $c="#c9cbdb" /></QuickSplit>
              <Bare $w={12} aria-label="更多"><svg width="8" height="8" viewBox="0 0 8 8" fill="none" stroke="#c9cbdb" strokeWidth="1.200"><path d="M0 1h8M1 4l3 3 3-3" /></svg></Bare>
            </Quick>
            <span>亿图图示</span>
            <WindowButtons>
              <Bare $w={35} aria-label="最小化"><svg width="6" height="10" viewBox="0 0 6 10"><path d="M0 8h6v2H0z" fill="#ddd" /></svg></Bare>
              <Bare $w={35} aria-label="还原"><svg width="8" height="8" viewBox="0 0 8 8" fill="none" stroke="#ddd"><path d="M.5 2.500h5v5h-5zM2.500 2V.5h5v5H6" /></svg></Bare>
              <Bare $w={35} aria-label="关闭"><Cross c="#e6e6e6" /></Bare>
            </WindowButtons>
          </TitleRow>
          <TabRow>
            <Tabs>
              {["文件", "开始", "插入", "页面布局", "视图", "符号", "帮助"].map((t, i) => (
                <Tab key={t} $on={i === 1} $first={i === 0}>{t}</Tab>
              ))}
            </Tabs>
            <Tools>
              <Spread>
                <Bare aria-label="发送"><Ico s={16} w={1.400}><path d="M19 2L1 9l6 3 12-10-3 16-6-4M7 12v6l3-4" /></Ico></Bare>
                <Bare aria-label="分享"><Ico s={16} w={1.400}><circle cx="4" cy="10" r="3" /><circle cx="16" cy="4" r="2.500" /><circle cx="16" cy="16" r="2.500" /><path d="M7 9l3 0 3.500-4M7 11h3l3.500 4" /></Ico></Bare>
              </Spread>
              <Account>
                小W
                <svg width="16" height="14" viewBox="0 0 16 14"><path d="M3 0h10l3 5-8 9L0 5z" fill="#f9b93f" /><path d="M8 14L0 5h16z" fill="#e6a23c" opacity=".6" /><path d="M5 4l3 4 3-4" fill="none" stroke="#fff" strokeWidth="1.600" /></svg>
                <Caret $c="#ddd" />
              </Account>
              <ShirtButton aria-label="主题"><Shirt size={16} strokeWidth={1.500} /><Caret $c="#ddd" /></ShirtButton>
              <Bare aria-label="应用"><Ico s={15} w={1.700}><rect x="1" y="1" width="7" height="7" rx="3" /><rect x="12" y="1" width="7" height="7" rx="3" /><rect x="1" y="12" width="7" height="7" rx="3" /><rect x="12" y="12" width="7" height="7" rx="3" /></Ico></Bare>
              <Bare $w={34} aria-label="收起"><svg width="12" height="7" viewBox="0 0 12 7" fill="none" stroke="#c9cbdb" strokeWidth="1.300"><path d="M1 6l5-5 5 5" /></svg></Bare>
            </Tools>
          </TabRow>
        </Header>

        <Ribbon>
          <Rows $pad="8px 0 0 14px">
            <Row>
              <SplitButton $w={38} aria-label="剪切" $c="#777"><Scissors size={18} transform="rotate(-90)" /></SplitButton>
              <SplitButton $w={35} aria-label="格式刷" $c="#777"><Ico><path d="M4 9l7-5 6 9-6 4-7-6z" /><path d="M9 4l6-3 3 3-5 5z" fill="currentColor" stroke="none" /></Ico></SplitButton>
            </Row>
            <Row>
              <SplitButton $w={38} aria-label="复制" $c={DIM}><Copy size={18} /></SplitButton>
              <SplitButton $w={35} aria-label="粘贴" $c={INK}><Clipboard size={18} strokeWidth={2.500} /><Caret $c={INK} /></SplitButton>
            </Row>
          </Rows>
          <Rule />
          <Rows $pad="8px 0 0 0">
            <Row $pad={16}>
              <Picker $w={196}><Select aria-label="字体"><option>宋体</option></Select><Caret /></Picker>
              <Picker $w={62}><Select aria-label="字号"><option>10</option></Select><Caret /></Picker>
              <Bare $w={38} aria-label="增大字号"><Ico><g stroke={DIM}><path d="M1 17L7 4l6 13M3 13h8" /><path d="M14 4h5M16.500 1.500v5" strokeWidth="1.500" /></g></Ico></Bare>
              <Bare $w={38} aria-label="减小字号"><Ico><g stroke={DIM}><path d="M1 17L7 4l6 13M3 13h8" /><path d="M14 4h5" strokeWidth="1.500" /></g></Ico></Bare>
              <SplitButton $w={37} aria-label="对齐方式"><Ico><path d="M3 5h9M3 9h14M3 13h9M3 16.500h14" /></Ico><Caret $c="#aaa" /></SplitButton>
            </Row>
            <Row $pad={7}>
              {formats.map(([n, d]) => <Bare key={n} $w={35} aria-label={n}><Ico><g stroke={DIM}>{d}</g></Ico></Bare>)}
              {splits.map(([n, d]) => <SplitButton key={n} $w={37} aria-label={n} $c="#999"><Ico>{d}</Ico><Caret $c="#aaa" /></SplitButton>)}
            </Row>
          </Rows>
          <Rule />
          <BigSet $pad={10}>
            {bigOne.map(([n, d, c], i) => (
              <Big key={n} $on={i === 3}>
                <BigIcon><Ico>{d}</Ico></BigIcon><BigLabel>{n}</BigLabel>{c && <Caret $c="#666" />}
              </Big>
            ))}
          </BigSet>
          <Rule />
          <BigSet $pad={8}>
            {bigTwo.map(([n, d]) => (
              <Big key={n} $dim><BigIcon><Ico>{d}</Ico></BigIcon><BigLabel $dim>{n}</BigLabel><Caret $c="#b4b4b4" /></Big>
            ))}
          </BigSet>
          <Rule />
          <Gallery>
            {["#b0b0b0", "#c6c6c6", "#bcbcbc", "#a6a6a6", "#d4d4d4", "#b8b8b8", "#b4b4b4", "#b0b0b0"].map((b, i) => <Swash key={i} $b={b}>Abc</Swash>)}
            <Scroller>
              <Bare aria-label="上一行"><Caret $up $c="#777" /></Bare>
              <Bare aria-label="下一行"><Caret $c="#777" /></Bare>
              <Bare aria-label="全部样式"><svg width="6" height="6" viewBox="0 0 6 6" fill="#777"><path d="M0 0h6v1H0zM0 3h6L3 6z" /></svg></Bare>
            </Scroller>
          </Gallery>
          <Rows $pad="8px 0 0 4px">
            <Row>
              <SplitButton $w={45} aria-label="填充"><Ico s={20}><Bucket /></Ico><Caret $c="#bbb" /></SplitButton>
              <SplitButton $w={45} aria-label="阴影"><Ico><circle cx="9" cy="9" r="6.500" /><path d="M5 15c7 4 14-2 11-9" strokeWidth="3.500" /></Ico><Caret $c="#bbb" /></SplitButton>
              <SplitButton $w={45} aria-label="裁剪" $c={INK}><Crop size={19} strokeWidth={2.500} /><Caret $c="#555" /></SplitButton>
            </Row>
            <Row>
              <SplitButton $w={45} aria-label="线条"><Ico><path d="M3 3l9 9" strokeWidth="3" /><path d="M13 12l4 5M14 12l-3 3" /></Ico><Caret $c="#bbb" /></SplitButton>
              <SplitButton $w={45} aria-label="线型" $c={INK}><Ico><path d="M2 4h16" strokeWidth="3.500" strokeDasharray="2 1.500" /><path d="M5 14h13" /><path d="M6 10.500L1 14l5 3.500z" fill="currentColor" stroke="none" /></Ico><Caret $c="#555" /></SplitButton>
              <SplitButton $w={45} aria-label="锁定"><Lock size={20} /><Caret $c="#bbb" /></SplitButton>
            </Row>
          </Rows>
          <Rule />
          <Rows $pad="8px 0 0 11px">
            <Row>
              <SplitButton $w={39} aria-label="查找" $c={INK}><Search size={20} strokeWidth={2.300} /></SplitButton>
              <SplitButton $w={39} aria-label="查找文本" $c={INK}><Ico><path d="M3 16V2h14v8M3 17h7M6 6h8M6 10h3" strokeWidth="2.200" /><circle cx="13" cy="13" r="2.800" /><path d="M15 15l3 3" /></Ico></SplitButton>
            </Row>
            <Row>
              <SplitButton $w={39} aria-label="适应页面" $c={INK}><Ico><rect x="2" y="2" width="16" height="16" rx="1" /><path d="M7 7h6v6H7z" fill="currentColor" stroke="none" /><path d="M5 5h2M13 5h2M5 15h2M13 15h2" /></Ico></SplitButton>
              <SplitButton $w={39} aria-label="替换"><Ico s={17}><path d="M3 3h6v7H3z" /><circle cx="14" cy="15" r="3.300" /><path d="M13 3h3v5M14 6l2 2 2-2M7 17H3v-4M1 14l2-2 2 2" strokeWidth="1.500" /></Ico><Caret $c="#aaa" /></SplitButton>
            </Row>
          </Rows>
        </Ribbon>

        <Body>
          <Library>
            <LibraryHead><span>符号库</span><Bare aria-label="折叠"><Chevrons /></Bare></LibraryHead>
            <SearchRow>
              <Bare aria-label="符号库菜单">
                <svg width="15" height="15" viewBox="0 0 15 15" fill={INK}><path d="M3 0h9v2H3zM1 3.500h13v2H1z" opacity=".75" /><path d="M0 7h4.500c1 3 5 3 6 0H15v6q0 1-1 1H1q-1 0-1-1z" /></svg>
              </Bare>
              <Caret $c="#666" />
              <SearchBox><SearchInput aria-label="搜索符号" placeholder="搜索符号" /><Search size={18} strokeWidth={2.800} /></SearchBox>
              <Steps>
                <Step aria-label="上一个"><svg width="9" height="5" viewBox="0 0 9 5" fill="none" stroke="#777"><path d="M.5 4.500l4-4 4 4" /></svg></Step>
                <Step aria-label="下一个"><svg width="9" height="5" viewBox="0 0 9 5" fill="none" stroke="#777"><path d="M.5.5l4 4 4-4" /></svg></Step>
              </Steps>
            </SearchRow>
            <Scroll>
              <Sections>
                <SectionHead>
                  <Triangle /><SectionTitle>我的库</SectionTitle>
                  <Bare $w={21} aria-label="导入"><svg width="11" height="11" viewBox="0 0 11 11" fill="none" stroke="#222" strokeWidth="1.200"><path d="M1 3V.7h9.300v9.600H1V8M8.500 5.500H3M5.500 3L3 5.500 5.500 8" /></svg></Bare>
                  <Bare $w={21} aria-label="添加"><svg width="11" height="11" viewBox="0 0 11 11" stroke="#222" strokeWidth="1.300"><path d="M5.500 0v11M0 5.500h11" /></svg></Bare>
                  <Bare $w={20} aria-label="关闭"><Cross /></Bare>
                </SectionHead>
                <Hint>选中任意符号，点击上方加号添加到此库。</Hint>
                {libraries.map((l) => (
                  <React.Fragment key={l.title}>
                    <SectionHead><Triangle /><SectionTitle>{l.title}</SectionTitle><Bare $w={20} aria-label="关闭"><Cross /></Bare></SectionHead>
                    <Cells $pad={l.dense ? "0 0 5px 0" : "3px 0 2px 0"}>
                      {l.items.map((n) => <Cell key={n} aria-label={n}><Hex name={n} w={l.dense ? 36 : 38} /></Cell>)}
                    </Cells>
                  </React.Fragment>
                ))}
                <SectionHead><Triangle /><SectionTitle>谷歌云平台其它符号</SectionTitle><Bare $w={20} aria-label="关闭"><Cross /></Bare></SectionHead>
                <Cells $pad="3px 0 2px 0">
                  {misc.map((m, i) => <Cell key={i} aria-label={`符号 ${i + 1}`}>{m}</Cell>)}
                </Cells>
              </Sections>
              <Track><Thumb $c="#d6d6d6" /></Track>
            </Scroll>
          </Library>

          <Center>
            <DocTabs>
              <DocTab><Doc c="#8c8c8c" /><DocName>GCP结构</DocName><Bare aria-label="关闭"><Cross /></Bare></DocTab>
              <DocTab $on><DocIcon><Doc c={NAVY} /><Dot /></DocIcon><DocName>GCP结构 (1)</DocName><Bare aria-label="关闭"><Cross /></Bare></DocTab>
            </DocTabs>
            <Work>
              <span />
              <ShiftX><RulerX>{marks(-100, 50).map((m) => <MarkX key={m}>{m}</MarkX>)}</RulerX></ShiftX>
              <SideTrack><SideThumb /></SideTrack>
              <RulerY><MarksY>{marks(-20, 25).map((m) => <MarkY key={m}><Turned>{m}</Turned></MarkY>)}</MarksY></RulerY>
              <Canvas><Paper><Diagram /></Paper></Canvas>
              <BottomTrack><BottomThumb /></BottomTrack>
            </Work>
            <Palette>
              <Bare $w={22} aria-label="填充颜色"><Ico s={13}><g color={INK} stroke={INK}><Bucket /></g></Ico></Bare>
              {palette.map((c, i) => <Swatch key={i} $c={c} aria-label={c} />)}
            </Palette>
          </Center>

          <Dock>
            <DockTop aria-label="展开"><Chevrons /></DockTop>
            {dock.map(([n, d], i) => <DockButton key={n} $on={i === 0} aria-label={n}>{d}</DockButton>)}
          </Dock>
        </Body>
      </Mirror>
    </>
  );
}
